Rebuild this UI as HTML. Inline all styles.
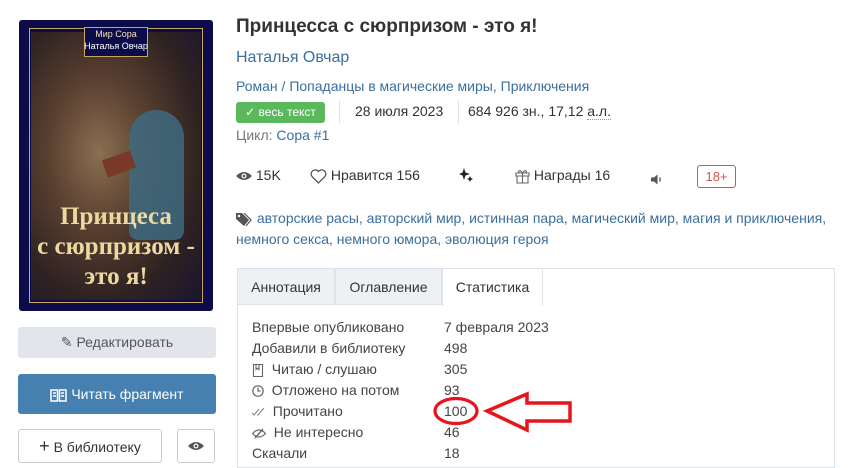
<!DOCTYPE html>
<html><head><meta charset="utf-8"><style>
*{box-sizing:border-box;margin:0;padding:0}
body{width:853px;height:466px;overflow:hidden;background:#fff;font-family:"Liberation Sans","DejaVu Sans",sans-serif;color:#333;position:relative;font-size:14px}
.a{position:absolute;white-space:nowrap}
.l{color:#3a6f9e}
.btn{position:absolute;border-radius:3px;text-align:center;font-size:14px}
.sep{position:absolute;width:1px;background:#dde3ea}
svg{vertical-align:middle}
</style></head><body>
<div class="a" style="left:19px;top:20px;width:194px;height:291px;border-radius:3px;background:#0c0c4a;overflow:hidden">
 <div class="a" style="left:12px;top:12px;width:170px;height:268px;background:radial-gradient(ellipse at 40% 45%,#8a7050 0%,#5a4030 35%,#2e2222 70%,#1a1530 100%)"></div>
 <div class="a" style="left:10px;top:8px;width:174px;height:275px;border:1px solid #c9a85a"></div>
 <div class="a" style="left:65px;top:7px;width:64px;height:30px;border:1px solid #c9a85a;background:#0c0c4a"></div>
 <div class="a" style="left:0;top:9px;width:194px;text-align:center;font-size:9px;color:#f2e3b8">Мир Сора</div>
 <div class="a" style="left:0;top:21px;width:194px;text-align:center;font-size:9px;color:#fff">Наталья Овчар</div>
 <div class="a" style="left:110px;top:90px;width:55px;height:130px;background:#3d6a80;border-radius:30px 30px 10px 10px;opacity:.85"></div>
 <div class="a" style="left:85px;top:135px;width:30px;height:18px;background:#7a3a2a;transform:rotate(-20deg)"></div>
 <div class="a" style="left:0;top:182px;width:194px;text-align:center;font-family:'Liberation Serif',serif;font-size:25px;line-height:30px;color:#ecd9a0;font-weight:bold">Принцеса<br>с сюрпризом -<br>это я!</div>
</div>
<div class="btn" style="left:18px;top:327px;width:198px;height:31px;background:#e2e6ec;color:#555;line-height:31px">✎ Редактировать</div>
<div class="btn" style="left:18px;top:374px;width:198px;height:40px;background:#4680b0;color:#fff;line-height:40px"><svg width="17" height="14" viewBox="0 0 17 14"><path d="M1 2h6.5v11H1zM9.5 2H16v11H9.5zM3 5h3M3 8h3M11 5h3M11 8h3" fill="none" stroke="#fff" stroke-width="1.5"/></svg> Читать фрагмент</div>
<div class="btn" style="left:18px;top:429px;width:144px;height:34px;border:1px solid #ccc;line-height:32px;color:#333"><span style="font-size:18px">+</span> В библиотеку</div>
<div class="btn" style="left:177px;top:429px;width:38px;height:34px;border:1px solid #ccc;line-height:30px"><svg width="16" height="10" viewBox="0 0 16 10"><path d="M0 5Q8 -3 16 5Q8 13 0 5Z" fill="#555"/><circle cx="8" cy="5" r="2.5" fill="#fff"/><circle cx="8" cy="5" r="1.3" fill="#555"/></svg></div>

<div class="a" style="left:236px;top:16px;font-size:19px;font-weight:bold;color:#333">Принцесса с сюрпризом - это я!</div>
<div class="a l" style="left:236px;top:49px;font-size:16px">Наталья Овчар</div>
<div class="a l" style="left:236px;top:78px">Роман / Попаданцы в магические миры, Приключения</div>
<div class="a" style="left:236px;top:102px;width:89px;height:21px;background:#5cb85c;border-radius:3px;color:#fff;font-size:12px;line-height:21px;text-align:center">✓ весь текст</div>
<div class="sep" style="left:339px;top:101px;height:23px"></div>
<div class="a" style="left:355px;top:103px">28 июля 2023</div>
<div class="sep" style="left:458px;top:101px;height:23px"></div>
<div class="a" style="left:468px;top:103px">684 926 зн., 17,12 <span style="border-bottom:1px dotted #999">а.л.</span></div>
<div class="a" style="left:236px;top:127px;color:#777">Цикл: <span class="l">Сора #1</span></div>
<div class="a" style="left:236px;top:167px"><svg width="16" height="10" viewBox="0 0 16 10"><path d="M0 5Q8 -3 16 5Q8 13 0 5Z" fill="#555"/><circle cx="8" cy="5" r="2.5" fill="#fff"/><circle cx="8" cy="5" r="1.3" fill="#555"/></svg> 15K</div>
<div class="a" style="left:310px;top:167px"><svg width="17" height="15" viewBox="0 0 17 15"><path d="M8.5 14L2 7.5A3.6 3.6 0 0 1 8.5 2.5A3.6 3.6 0 0 1 15 7.5Z" fill="none" stroke="#555" stroke-width="1.3"/></svg> Нравится 156</div>
<div class="a" style="left:459px;top:166px"><svg width="14" height="14" viewBox="0 0 14 14"><path d="M5 0L6.5 4.5L11 6L6.5 7.5L5 12L3.5 7.5L0 6L3.5 4.5Z M11 8L12 10L14 11L12 12L11 14L10 12L8 11L10 10Z" fill="#222"/></svg></div>
<div class="a" style="left:515px;top:167px"><svg width="15" height="15" viewBox="0 0 15 15"><path d="M1 4h13v3H1zM2 7h11v7H2zM7.5 4v10M7.5 4C5 0 2 2 4.5 4M7.5 4C10 0 13 2 10.5 4" fill="none" stroke="#666" stroke-width="1.1"/></svg> Награды 16</div>
<div class="a" style="left:651px;top:170px"><svg width="12" height="11" viewBox="0 0 12 11"><path d="M0 3.5h3L6.5 0.5v10L3 7.5H0Z" fill="#555"/><path d="M8.5 3.5Q10 5.5 8.5 7.5" fill="none" stroke="#555" stroke-width="1.3"/></svg></div>
<div class="a" style="left:697px;top:165px;width:39px;height:23px;border:1px solid #d9534f;border-radius:3px;color:#d9534f;text-align:center;line-height:21px;font-size:13px">18+</div>
<div class="a l" style="left:236px;top:208px;line-height:21px;white-space:normal;width:610px"><svg width="17" height="13" viewBox="0 0 17 13"><path d="M0 0h6l7 7-5 6-8-7z" fill="#555"/><circle cx="3" cy="3" r="1.2" fill="#fff"/><path d="M8 0l7 7-5 6" fill="none" stroke="#555" stroke-width="1.2"/></svg> авторские расы, авторский мир, истинная пара, магический мир, магия и приключения, немного секса, немного юмора, эволюция героя</div>

<div class="a" style="left:237px;top:268px;width:598px;height:200px;border:1px solid #dde3ea"></div>
<div class="a" style="left:237px;top:268px;width:98px;height:37px;background:#eef1f4;border:1px solid #dde3ea;line-height:36px;text-align:center">Аннотация</div>
<div class="a" style="left:335px;top:268px;width:107px;height:37px;background:#eef1f4;border:1px solid #dde3ea;line-height:36px;text-align:center">Оглавление</div>
<div class="a" style="left:442px;top:268px;width:101px;height:38px;background:#fff;border:1px solid #dde3ea;border-bottom:none;line-height:36px;text-align:center">Статистика</div>
<div class="a" style="left:252px;top:317px;line-height:21px;color:#444">Впервые опубликовано<br>Добавили в библиотеку<br><svg width="12" height="13" viewBox="0 0 12 13"><path d="M1.5 0.5h9v12h-9zM4 0.5v5l1.5-1.2 1.5 1.2v-5" fill="none" stroke="#666" stroke-width="1.1"/></svg>&nbsp; Читаю / слушаю<br><svg width="12" height="12" viewBox="0 0 12 12"><circle cx="6" cy="6" r="5.2" fill="none" stroke="#666" stroke-width="1.2"/><path d="M6 2.5V6h2.5" fill="none" stroke="#666" stroke-width="1.2"/></svg>&nbsp; Отложено на потом<br><svg width="13" height="10" viewBox="0 0 13 10"><path d="M0 6l2 2 5-6M5 8l1 0 6-7" fill="none" stroke="#888" stroke-width="1.1"/></svg>&nbsp; Прочитано<br><svg width="14" height="11" viewBox="0 0 14 11"><path d="M0.5 5.5Q7 -1.5 13.5 5.5Q7 12.5 0.5 5.5Z" fill="none" stroke="#666" stroke-width="1.2"/><path d="M3 10L11 1" stroke="#666" stroke-width="1.4"/></svg>&nbsp; Не интересно<br>Скачали</div>
<div class="a" style="left:444px;top:317px;line-height:21px;color:#444">7 февраля 2023<br>498<br>305<br>93<br>100<br>46<br>18</div>
<svg class="a" style="left:430px;top:390px" width="150" height="45"><ellipse cx="26" cy="21" rx="21" ry="12.5" fill="none" stroke="#e8141c" stroke-width="3.2"/><path d="M57 21 L97 4 L97 13 L140 13 L140 31 L97 31 L97 40 Z" fill="none" stroke="#e8141c" stroke-width="3.5" stroke-linejoin="miter"/></svg>
</body></html>
